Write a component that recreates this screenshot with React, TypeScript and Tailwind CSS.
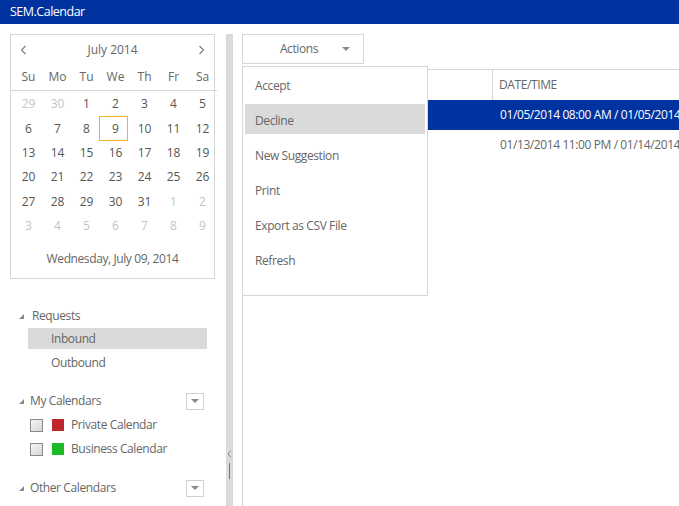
import React from 'react';

const font = { fontFamily: '"Open Sans", "Noto Sans", sans-serif' };

const weeks = [
  [29, 30, 1, 2, 3, 4, 5],
  [6, 7, 8, 9, 10, 11, 12],
  [13, 14, 15, 16, 17, 18, 19],
  [20, 21, 22, 23, 24, 25, 26],
  [27, 28, 29, 30, 31, 1, 2],
  [3, 4, 5, 6, 7, 8, 9],
];

const Tri = () => (
  <svg width="7" height="7" viewBox="0 0 7 7" className="shrink-0">
    <path d="M6 1 L6 6 L1 6 Z" fill="#8a8a8a" />
  </svg>
);

const SmallDrop = () => (
  <div className="w-[18px] h-[17px] border border-[#d0d0d0] flex items-center justify-center">
    <svg width="8" height="5" viewBox="0 0 8 5">
      <path d="M0 0 L8 0 L4 4 Z" fill="#8a8a8a" />
    </svg>
  </div>
);

const Check = () => (
  <div className="w-[13px] h-[13px] border border-[#8a8a8a] bg-gradient-to-br from-[#f6f6f6] to-[#d6d6d6] shrink-0" />
);

function MiniCalendar() {
  return (
    <div className="w-[205px] h-[245px] border border-[#d6d6d6] flex flex-col">
      <div className="h-[29px] flex items-center justify-between px-[9px] text-[12px] text-[#666]">
        <svg width="7" height="10" viewBox="0 0 7 10"><path d="M5.5 1 L1.5 5 L5.5 9" stroke="#777" strokeWidth="1.1" fill="none" /></svg>
        <span>July 2014</span>
        <svg width="7" height="10" viewBox="0 0 7 10"><path d="M1.5 1 L5.5 5 L1.5 9" stroke="#777" strokeWidth="1.1" fill="none" /></svg>
      </div>
      <div className="grid grid-cols-7 h-[27px] items-center border-b border-[#d6d6d6] text-[12px] text-[#666] text-center pl-[3px] -mr-[3px]">
        {['Su', 'Mo', 'Tu', 'We', 'Th', 'Fr', 'Sa'].map((d) => (
          <span key={d}>{d}</span>
        ))}
      </div>
      <div className="flex flex-col pt-[1px] pl-[3px] -mr-[3px]">
        {weeks.map((w, wi) => (
          <div key={wi} className="grid grid-cols-7 h-[24.4px] text-[12px] text-center">
            {w.map((d, di) => {
              const other = (wi === 0 && d > 20) || (wi >= 4 && d < 15);
              const sel = wi === 1 && d === 9;
              return (
                <div key={di} className="flex items-center justify-center">
                  {sel ? (
                    <span className="relative -left-[2px] border border-[#f2b51b] w-[29px] h-[25px] flex items-center justify-center pl-[4px] text-[#555]">
                      {d}
                    </span>
                  ) : (
                    <span className={other ? 'text-[#c4c4c4]' : 'text-[#555]'}>{d}</span>
                  )}
                </div>
              );
            })}
          </div>
        ))}
      </div>
      <div className="flex-1 flex items-center justify-center text-[12px] text-[#666] pt-[1px] tracking-[-0.4px]">
        Wednesday, July 09, 2014
      </div>
    </div>
  );
}

export default function App() {
  const menu = ['Accept', 'Decline', 'New Suggestion', 'Print', 'Export as CSV File', 'Refresh'];
  return (
    <div className="w-[679px] h-[506px] overflow-hidden bg-white flex flex-col" style={font}>
      <div className="h-[24px] bg-[#0033a0] text-white text-[12.5px] tracking-[-0.5px] pl-[10px] flex items-center shrink-0">
        SEM.Calendar
      </div>
      <div className="flex flex-1 min-h-0">
        {/* sidebar */}
        <div className="w-[226px] pl-[10px] pt-[10px] flex flex-col shrink-0">
          <MiniCalendar />
          <div className="mt-[26px] text-[12px] text-[#666] tracking-[-0.4px]">
            <div className="flex items-center h-[22px] pl-[8px] gap-[7px]">
              <Tri />
              <span>Requests</span>
            </div>
            <div className="ml-[18px] w-[179px] h-[21px] bg-[#dadada] flex items-center pl-[23px] mt-[1px]">Inbound</div>
            <div className="ml-[18px] h-[27px] flex items-center pl-[23px]">Outbound</div>
            <div className="flex items-center h-[22px] pl-[8px] gap-[5px] mt-[14px] pr-[22px]">
              <Tri />
              <span className="flex-1">My Calendars</span>
              <SmallDrop />
            </div>
            <div className="flex items-center h-[24px] pl-[20px] mt-[1px]">
              <Check />
              <span className="w-[12px] h-[12px] bg-[#c0272d] ml-[9px]" />
              <span className="ml-[7px]">Private Calendar</span>
            </div>
            <div className="flex items-center h-[24px] pl-[20px]">
              <Check />
              <span className="w-[12px] h-[12px] bg-[#1dba27] ml-[9px]" />
              <span className="ml-[7px]">Business Calendar</span>
            </div>
            <div className="flex items-center h-[22px] pl-[8px] gap-[5px] mt-[16px] pr-[22px]">
              <Tri />
              <span className="flex-1">Other Calendars</span>
              <SmallDrop />
            </div>
          </div>
        </div>
        {/* splitter */}
        <div className="w-[7px] mt-[10px] bg-[#dbdbdb] flex flex-col items-center justify-end pb-[27px] shrink-0">
          <svg width="5" height="8" viewBox="0 0 5 8"><path d="M4 0.5 L1 4 L4 7.5" stroke="#8a8a8a" strokeWidth="1" fill="none" /></svg>
          <div className="w-[1px] h-[16px] bg-[#777] mt-[5px]" />
        </div>
        {/* main */}
        <div className="flex-1 ml-[9px] pt-[10px] relative min-w-0 text-[12px] tracking-[-0.4px]">
          <div className="w-[122px] h-[30px] border border-[#d6d6d6] flex items-center text-[#666]">
            <span className="w-[112px] text-center">Actions</span>
            <svg width="8" height="5" viewBox="0 0 8 5" className="-ml-[13px]"><path d="M0 0 L8 0 L4 4 Z" fill="#8a8a8a" /></svg>
          </div>
          <div className="mt-[5px] border-l border-t border-[#d6d6d6] h-full">
            <div className="h-[30px] flex">
              <div className="w-[250px] border-r border-[#d6d6d6]" />
              <div className="flex items-center pl-[6px] text-[#666]">DATE/TIME</div>
            </div>
            <div className="h-[30px] bg-[#0033a0] text-white flex items-center pl-[257px] whitespace-nowrap">
              01/05/2014 08:00 AM / 01/05/2014 09:00 AM
            </div>
            <div className="h-[30px] text-[#666] flex items-center pl-[257px] whitespace-nowrap">
              01/13/2014 11:00 PM / 01/14/2014 01:00 AM
            </div>
          </div>
          <div className="absolute left-0 top-[42px] w-[186px] h-[230px] bg-white border border-[#d6d6d6] pt-[2px] px-[2px] flex flex-col gap-[5px] text-[#666]">
            {menu.map((m) => (
              <div key={m} className={'h-[30px] flex items-center pl-[10px] pt-[3px] ' + (m === 'Decline' ? 'bg-[#dadada]' : '')}>
                {m}
              </div>
            ))}
          </div>
        </div>
      </div>
    </div>
  );
}
